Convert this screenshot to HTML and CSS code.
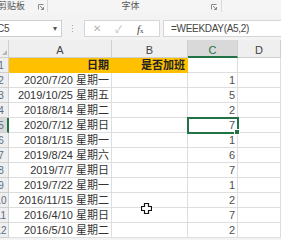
FILE: index.html
```html
<!DOCTYPE html>
<html>
<head>
	<meta charset="utf-8"/>
	<title>WEEKDAY</title>
	<link rel="stylesheet" href="styles.css">
</head>
<body>
<div class="ribbon">
	<div class="rgroup clip">
		<span class="rlabel">剪贴板</span>
		<svg class="launch" width="6" height="6" viewBox="0 0 6 6"><path d="M0.5 5.5V0.5H5.5" fill="none" stroke="#8a8a8a"/><path d="M2 2L5.5 5.5M5.5 3V5.5H3" fill="none" stroke="#8a8a8a"/></svg>
	</div>
	<div class="rgroup font">
		<span class="rlabel">字体</span>
		<svg class="launch" width="6" height="6" viewBox="0 0 6 6"><path d="M0.5 5.5V0.5H5.5" fill="none" stroke="#8a8a8a"/><path d="M2 2L5.5 5.5M5.5 3V5.5H3" fill="none" stroke="#8a8a8a"/></svg>
	</div>
	<div class="rgroup rest"></div>
</div>

<div class="fbar">
	<div class="namebox"><span class="ref">C5</span><span class="drop">&#9662;</span></div>
	<div class="grip"><i></i><i></i><i></i></div>
	<div class="fnbox">
		<span class="fbtn off">&#10005;</span>
		<span class="fbtn off">&#10003;</span>
		<span class="fbtn fx"><i>f</i><small>x</small></span>
	</div>
	<div class="formula">=WEEKDAY(A5,2)</div>
</div>

<div class="sheet">
	<div class="grid">
		<div class="corner"><span class="tri"></span></div>
		<div class="colh">A</div>
		<div class="colh">B</div>
		<div class="colh on">C</div>
		<div class="colh">D</div>

		<div class="rowh"><span>1</span></div>
		<div class="cell fill bold">日期</div>
		<div class="cell fill bold">是否加班</div>
		<div class="cell"></div>
		<div class="cell"></div>

		<div class="rowh"><span>2</span></div>
		<div class="cell">2020/7/20 星期一</div>
		<div class="cell"></div>
		<div class="cell num">1</div>
		<div class="cell"></div>

		<div class="rowh"><span>3</span></div>
		<div class="cell">2019/10/25 星期五</div>
		<div class="cell"></div>
		<div class="cell num">5</div>
		<div class="cell"></div>

		<div class="rowh"><span>4</span></div>
		<div class="cell">2018/8/14 星期二</div>
		<div class="cell"></div>
		<div class="cell num">2</div>
		<div class="cell"></div>

		<div class="rowh on"><span>5</span></div>
		<div class="cell">2020/7/12 星期日</div>
		<div class="cell"></div>
		<div class="cell num sel">7<span class="handle"></span></div>
		<div class="cell"></div>

		<div class="rowh"><span>6</span></div>
		<div class="cell">2018/1/15 星期一</div>
		<div class="cell"></div>
		<div class="cell num">1</div>
		<div class="cell"></div>

		<div class="rowh"><span>7</span></div>
		<div class="cell">2019/8/24 星期六</div>
		<div class="cell"></div>
		<div class="cell num">6</div>
		<div class="cell"></div>

		<div class="rowh"><span>8</span></div>
		<div class="cell">2019/7/7 星期日</div>
		<div class="cell"></div>
		<div class="cell num">7</div>
		<div class="cell"></div>

		<div class="rowh"><span>9</span></div>
		<div class="cell">2019/7/22 星期一</div>
		<div class="cell"></div>
		<div class="cell num">1</div>
		<div class="cell"></div>

		<div class="rowh"><span>10</span></div>
		<div class="cell">2016/11/15 星期二</div>
		<div class="cell"></div>
		<div class="cell num">2</div>
		<div class="cell"></div>

		<div class="rowh"><span>11</span></div>
		<div class="cell">2016/4/10 星期日</div>
		<div class="cell"></div>
		<div class="cell num">7</div>
		<div class="cell"></div>

		<div class="rowh"><span>12</span></div>
		<div class="cell">2016/5/10 星期二</div>
		<div class="cell"></div>
		<div class="cell num">2</div>
		<div class="cell"></div>
	</div>
	<svg class="cursor" width="11" height="11" viewBox="0 0 11 11"><path d="M3.5 0.5H7.5V3.5H10.5V7.5H7.5V10.5H3.5V7.5H0.5V3.5H3.5Z" fill="#fff" stroke="#111" stroke-width="1.2"/></svg>
</div>
</body>
</html>
```

FILE: styles.css
```css
/* =====reset===== */
html, body, div, span, i, small { margin: 0; padding: 0; }
body { width: 281px; height: 240px; overflow: hidden; background: #f3f3f3; color: #333;
	font-family: "Liberation Sans", "Noto Sans CJK SC", sans-serif; font-size: 11px; }

/* =====ribbon===== */
.ribbon { display: flex; height: 13px; background: #f5f5f5; }
.rgroup { display: flex; align-items: center; height: 12px; border-right: 1px solid #d8d8d8; }
.rgroup.clip { width: 48px; justify-content: space-between; padding-right: 3px; box-sizing: border-box; }
.rgroup.clip .rlabel { margin-left: -2px; }
.rgroup.font { width: 174px; box-sizing: border-box; padding-right: 4px; }
.rgroup.font .rlabel { flex: 1; text-align: center; padding-left: 2px; }
.rgroup.rest { flex: 1; border-right: 0; }
.rlabel { font-size: 9px; color: #555; line-height: 12px; }
.launch { display: block; margin-top: 2px; }

/* =====formula bar===== */
.fbar { display: flex; align-items: center; height: 17px; margin-top: 7px; }
.namebox { display: flex; align-items: center; justify-content: space-between; width: 62px; height: 17px;
	box-sizing: border-box; background: #fff; border: 1px solid #cfcfcf; border-left: 0; padding-right: 4px; }
.ref { font-size: 10px; color: #444; margin-left: -3px; letter-spacing: -0.2px; }
.drop { font-size: 8px; color: #555; }
.grip { display: flex; flex-direction: column; gap: 2px; width: 2px; margin: 0 10px 0 10px; }
.grip i { display: block; width: 1px; height: 1px; background: #aaa; }
.fnbox { display: flex; align-items: center; width: 76px; height: 17px; box-sizing: border-box;
	background: #fff; border: 1px solid #d6d6d6; padding-left: 8px; }
.fbtn { width: 25px; font-size: 10px; text-align: left; }
.fbtn.off { color: #b4b4b4; }
.fbtn.fx { color: #444; font-family: "Liberation Serif", serif; font-size: 11px; }
.fbtn.fx small { font-size: 7px; }
.formula { flex: 1; height: 17px; box-sizing: border-box; margin-left: 3px; background: #fff;
	border: 1px solid #d6d6d6; border-right: 0; padding-left: 7px; line-height: 15px;
	font-size: 10px; color: #444; letter-spacing: -0.3px; }

/* =====sheet===== */
.sheet { position: relative; margin-top: 3px; background: #fff; }
.grid { display: grid; grid-template-columns: 9px 103px 76px 50px 43px; grid-template-rows: 18px repeat(12, 15px); }
.grid > div { box-sizing: border-box; border-right: 1px solid #dedede; border-bottom: 1px solid #dedede; overflow: hidden; white-space: nowrap; }
.corner { position: relative; background: #efefef; border-color: #cfcfcf !important; }
.tri { position: absolute; right: 1px; bottom: 2px; width: 0; height: 0;
	border-left: 5px solid transparent; border-bottom: 5px solid #b8b8b8; }
.colh { background: #efefef; border-color: #cfcfcf !important; text-align: center; line-height: 21px; color: #444; font-size: 11px; }
.colh.on { background: #d9d9d9; color: #217346; border-bottom: 2px solid #217346 !important; }
.rowh { background: #efefef; border-color: #cfcfcf !important; line-height: 15px; font-size: 10px; color: #5a6c80; }
.rowh span { display: block; width: 18px; margin-left: -8px; text-align: center; }
.rowh.on { background: #d9d9d9; border-right: 2px solid #217346 !important; }
.cell { text-align: right; padding-right: 2px; line-height: 15px; color: #333; }
.cell.fill { background: #ffc000; border-color: #ffc000 !important; color: #222; }
.bold { font-weight: bold; }
.num { color: #505050; }
.sel { position: relative; z-index: 1; overflow: visible !important; outline: 2px solid #217346; outline-offset: -1px; }
.handle { position: absolute; right: -3px; bottom: -3px; width: 4px; height: 4px; background: #217346; border: 1px solid #fff; }
.cursor { position: absolute; left: 141px; top: 163px; }
```
